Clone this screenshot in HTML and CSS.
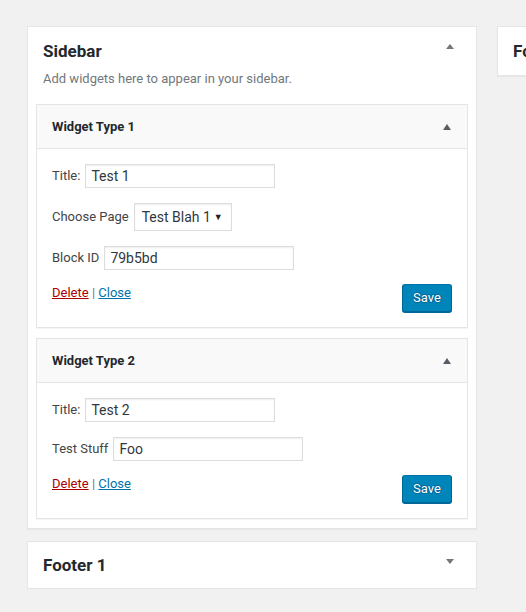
FILE: index.html
```html
<!DOCTYPE html>
<html lang="en">
<head>
<meta charset="utf-8">
<title>Widgets</title>
<link rel="stylesheet" href="styles.css">
</head>
<body>
<div class="columns">
  <div class="col">
    <section class="area">
      <div class="area-head">
        <h2 class="area-title">Sidebar</h2>
        <svg class="arrow arrow-area" width="8" height="5" viewBox="0 0 8 5"><polygon points="0,5 8,5 4,0"/></svg>
      </div>
      <p class="area-desc">Add widgets here to appear in your sidebar.</p>
      <div class="widgets">
        <div class="widget">
          <div class="widget-head">
            <h3 class="widget-title">Widget Type 1</h3>
            <svg class="arrow arrow-widget" width="8" height="6" viewBox="0 0 8 6"><polygon points="0,6 8,6 4,0"/></svg>
          </div>
          <div class="widget-body">
            <div class="field"><label class="label">Title:</label><input class="text" type="text" value="Test 1"></div>
            <div class="field"><label class="label">Choose Page</label><div class="select"><span>Test Blah 1</span><span class="select-arrow">▼</span></div></div>
            <div class="field"><label class="label">Block ID</label><input class="text" type="text" value="79b5bd"></div>
            <div class="actions">
              <div class="links"><a class="delete" href="#">Delete</a> <span class="sep">|</span> <a class="close" href="#">Close</a></div>
              <button class="save" type="button">Save</button>
            </div>
          </div>
        </div>
        <div class="widget">
          <div class="widget-head">
            <h3 class="widget-title">Widget Type 2</h3>
            <svg class="arrow arrow-widget" width="8" height="6" viewBox="0 0 8 6"><polygon points="0,6 8,6 4,0"/></svg>
          </div>
          <div class="widget-body">
            <div class="field"><label class="label">Title:</label><input class="text" type="text" value="Test 2"></div>
            <div class="field"><label class="label">Test Stuff</label><input class="text" type="text" value="Foo"></div>
            <div class="actions">
              <div class="links"><a class="delete" href="#">Delete</a> <span class="sep">|</span> <a class="close" href="#">Close</a></div>
              <button class="save" type="button">Save</button>
            </div>
          </div>
        </div>
      </div>
    </section>
    <section class="area area-closed">
      <div class="area-head">
        <h2 class="area-title">Footer 1</h2>
        <svg class="arrow arrow-down" width="8" height="5" viewBox="0 0 8 5"><polygon points="0,0 8,0 4,5"/></svg>
      </div>
    </section>
  </div>
  <div class="col">
    <section class="area area-closed area-right">
      <div class="area-head">
        <h2 class="area-title">Footer 2</h2>
        <svg class="arrow arrow-area" width="8" height="5" viewBox="0 0 8 5"><polygon points="0,0 8,0 4,5"/></svg>
      </div>
    </section>
  </div>
</div>
</body>
</html>
```
FILE: styles.css
```css
html, body {
  margin: 0;
  overflow: hidden;
}
body {
  background: #f1f1f1;
  font-family: Roboto, "Liberation Sans", sans-serif;
  color: #444;
  font-size: 13px;
}
.columns {
  display: flex;
  gap: 20px;
  padding: 26px 0 0 27px;
}
.col {
  flex: 0 0 450px;
  width: 450px;
  display: flex;
  flex-direction: column;
  gap: 12px;
}
.area {
  background: #fff;
  border: 1px solid #e5e5e5;
  box-shadow: 0 1px 1px rgba(0,0,0,.04);
}
.area-head {
  display: flex;
  justify-content: space-between;
  align-items: flex-start;
  padding: 12px 22px 0 15px;
}
.area-closed .area-head {
  padding: 11px 22px 11px 15px;
}
.area-right .area-head {
  padding: 12px 22px 12px 15px;
}
.area-title {
  margin: 0;
  font-size: 17px;
  line-height: 24px;
  font-weight: 700;
  color: #23282d;
}
.arrow {
  display: block;
  flex: none;
}
.arrow-area {
  margin-top: 5px;
  fill: #72777c;
}
.arrow-down {
  margin-top: 6px;
  fill: #72777c;
}
.area-desc {
  margin: 7px 15px 16px;
  font-size: 13px;
  line-height: 18px;
  color: #72777c;
}
.widgets {
  display: flex;
  flex-direction: column;
  gap: 10px;
  padding: 0 8px 9px;
}
.widget {
  border: 1px solid #e5e5e5;
  background: #fff;
  box-shadow: 0 1px 1px rgba(0,0,0,.04);
}
.widget-head {
  display: flex;
  justify-content: space-between;
  align-items: center;
  height: 43px;
  padding: 0 16px 0 15px;
  background: #f9f9f9;
  border-bottom: 1px solid #e5e5e5;
}
.widget-title {
  margin: 0;
  font-size: 13px;
  line-height: 18px;
  font-weight: 700;
  color: #23282d;
}
.arrow-widget {
  fill: #555d66;
}
.widget-body {
  display: flex;
  flex-direction: column;
  gap: 15px;
  padding: 15px 15px 15px;
}
.field {
  display: flex;
  align-items: center;
  gap: 5px;
}
.label {
  font-size: 13px;
  line-height: 18px;
  color: #444;
}
.text {
  box-sizing: border-box;
  width: 190px;
  height: 24px;
  margin: 0;
  padding: 0 5px;
  border: 1px solid #ddd;
  border-radius: 0;
  box-shadow: inset 0 1px 2px rgba(0,0,0,.07);
  background: #fff;
  font-family: Roboto, "Liberation Sans", sans-serif;
  font-size: 14px;
  color: #32373c;
  outline: none;
}
.select {
  box-sizing: border-box;
  width: 98px;
  height: 28px;
  padding: 0 8px 0 7px;
  border: 1px solid #ddd;
  box-shadow: inset 0 1px 2px rgba(0,0,0,.07);
  display: flex;
  align-items: center;
  justify-content: space-between;
  font-size: 14px;
  color: #32373c;
}
.select-arrow {
  font-size: 9px;
  color: #222;
}
.actions {
  display: flex;
  justify-content: space-between;
  align-items: flex-start;
  margin-top: -1px;
}
.links {
  font-size: 13px;
  line-height: 18px;
}
.delete {
  color: #a00;
  text-decoration: underline;
}
.close {
  color: #0073aa;
  text-decoration: underline;
}
.sep {
  color: #72777c;
}
.save {
  box-sizing: border-box;
  height: 28px;
  width: 50px;
  margin: 0;
  padding: 0 10px 1px;
  background: #0085ba;
  border: 1px solid;
  border-color: #0073aa #006799 #006799;
  border-radius: 3px;
  box-shadow: 0 1px 0 #006799;
  color: #fff;
  font-family: Roboto, "Liberation Sans", sans-serif;
  font-size: 13px;
  line-height: 26px;
  text-shadow: 0 -1px 1px #006799, 1px 0 1px #006799, 0 1px 1px #006799, -1px 0 1px #006799;
}
```
